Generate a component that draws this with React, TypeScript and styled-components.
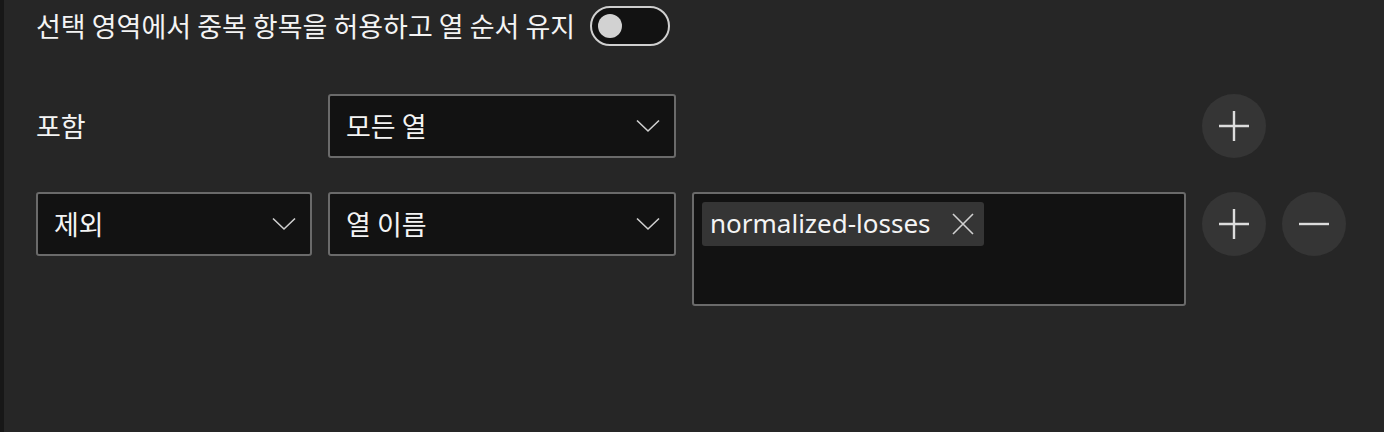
import React from "react";
import styled, { createGlobalStyle } from "styled-components";

const Global = createGlobalStyle`
  html, body { margin: 0; padding: 0; background: #262626; }
  body { font-family: "Noto Sans", "Noto Sans CJK KR", sans-serif; color: #f2f2f2; }
  * { box-sizing: border-box; }
`;

const Page = styled.div`
  width: 1384px;
  height: 432px;
  border-left: 4px solid #171717;
  padding: 6px 0 0 32px;
  overflow: hidden;
`;

const ToggleRow = styled.div`
  display: flex;
  align-items: center;
  gap: 15px;
  height: 40px;
`;

const Label = styled.span`
  font-family: "Noto Sans CJK KR", sans-serif;
  font-size: 27px;
  line-height: 34px;
  color: #f4f4f4;
  white-space: nowrap;
`;

const Switch = styled.div`
  width: 80px;
  height: 40px;
  border: 2px solid #cfcfcf;
  border-radius: 20px;
  background: #121212;
  display: flex;
  align-items: center;
  padding-left: 6px;
`;

const Knob = styled.div`
  width: 24px;
  height: 24px;
  border-radius: 50%;
  background: #d2d2d2;
`;

const Grid = styled.div`
  display: grid;
  grid-template-columns: 276px 348px 494px 64px 64px;
  column-gap: 16px;
  row-gap: 34px;
  margin-top: 48px;
  align-items: start;
`;

const LabelCell = styled.div`
  height: 64px;
  display: flex;
  align-items: center;
`;

const Select = styled.div`
  height: 64px;
  border: 2px solid #6a6a6a;
  border-radius: 3px;
  background: #121212;
  display: flex;
  align-items: center;
  justify-content: space-between;
  padding: 0 14px 0 16px;
`;

const Chevron = () => (
  <svg width="24" height="14" viewBox="0 0 24 14" fill="none">
    <path d="M1 1.5 L12 12 L23 1.5" stroke="#d0d0d0" strokeWidth="1.6" />
  </svg>
);

const TagBox = styled.div`
  height: 114px;
  border: 2px solid #6a6a6a;
  border-radius: 3px;
  background: #121212;
  padding: 8px;
  display: flex;
  align-items: flex-start;
`;

const Tag = styled.div`
  height: 44px;
  background: #353535;
  border-radius: 3px;
  display: flex;
  align-items: center;
  gap: 21px;
  padding: 0 10px 0 8px;
`;

const TagText = styled.span`
  font-family: "Noto Sans", sans-serif;
  font-size: 26px;
  line-height: 34px;
  color: #f4f4f4;
  margin-top: -2px;
`;

const CloseIcon = () => (
  <svg width="22" height="22" viewBox="0 0 22 22" fill="none">
    <path d="M1 1 L21 21 M21 1 L1 21" stroke="#d0d0d0" strokeWidth="1.6" />
  </svg>
);

const RoundButton = styled.div`
  width: 64px;
  height: 64px;
  border-radius: 50%;
  background: #353535;
  display: flex;
  align-items: center;
  justify-content: center;
`;

const PlusIcon = () => (
  <svg width="30" height="30" viewBox="0 0 30 30" fill="none">
    <path d="M15 0 V30 M0 15 H30" stroke="#dcdcdc" strokeWidth="2.4" />
  </svg>
);

const MinusIcon = () => (
  <svg width="30" height="30" viewBox="0 0 30 30" fill="none">
    <path d="M0 15 H30" stroke="#dcdcdc" strokeWidth="2.4" />
  </svg>
);

const Empty = styled.div``;

export default function App() {
  return (
    <>
      <Global />
      <Page>
        <ToggleRow>
          <Label>선택 영역에서 중복 항목을 허용하고 열 순서 유지</Label>
          <Switch>
            <Knob />
          </Switch>
        </ToggleRow>
        <Grid>
          <LabelCell>
            <Label>포함</Label>
          </LabelCell>
          <Select>
            <Label>모든 열</Label>
            <Chevron />
          </Select>
          <Empty />
          <RoundButton>
            <PlusIcon />
          </RoundButton>
          <Empty />

          <Select>
            <Label>제외</Label>
            <Chevron />
          </Select>
          <Select>
            <Label>열 이름</Label>
            <Chevron />
          </Select>
          <TagBox>
            <Tag>
              <TagText>normalized-losses</TagText>
              <CloseIcon />
            </Tag>
          </TagBox>
          <RoundButton>
            <PlusIcon />
          </RoundButton>
          <RoundButton>
            <MinusIcon />
          </RoundButton>
        </Grid>
      </Page>
    </>
  );
}
